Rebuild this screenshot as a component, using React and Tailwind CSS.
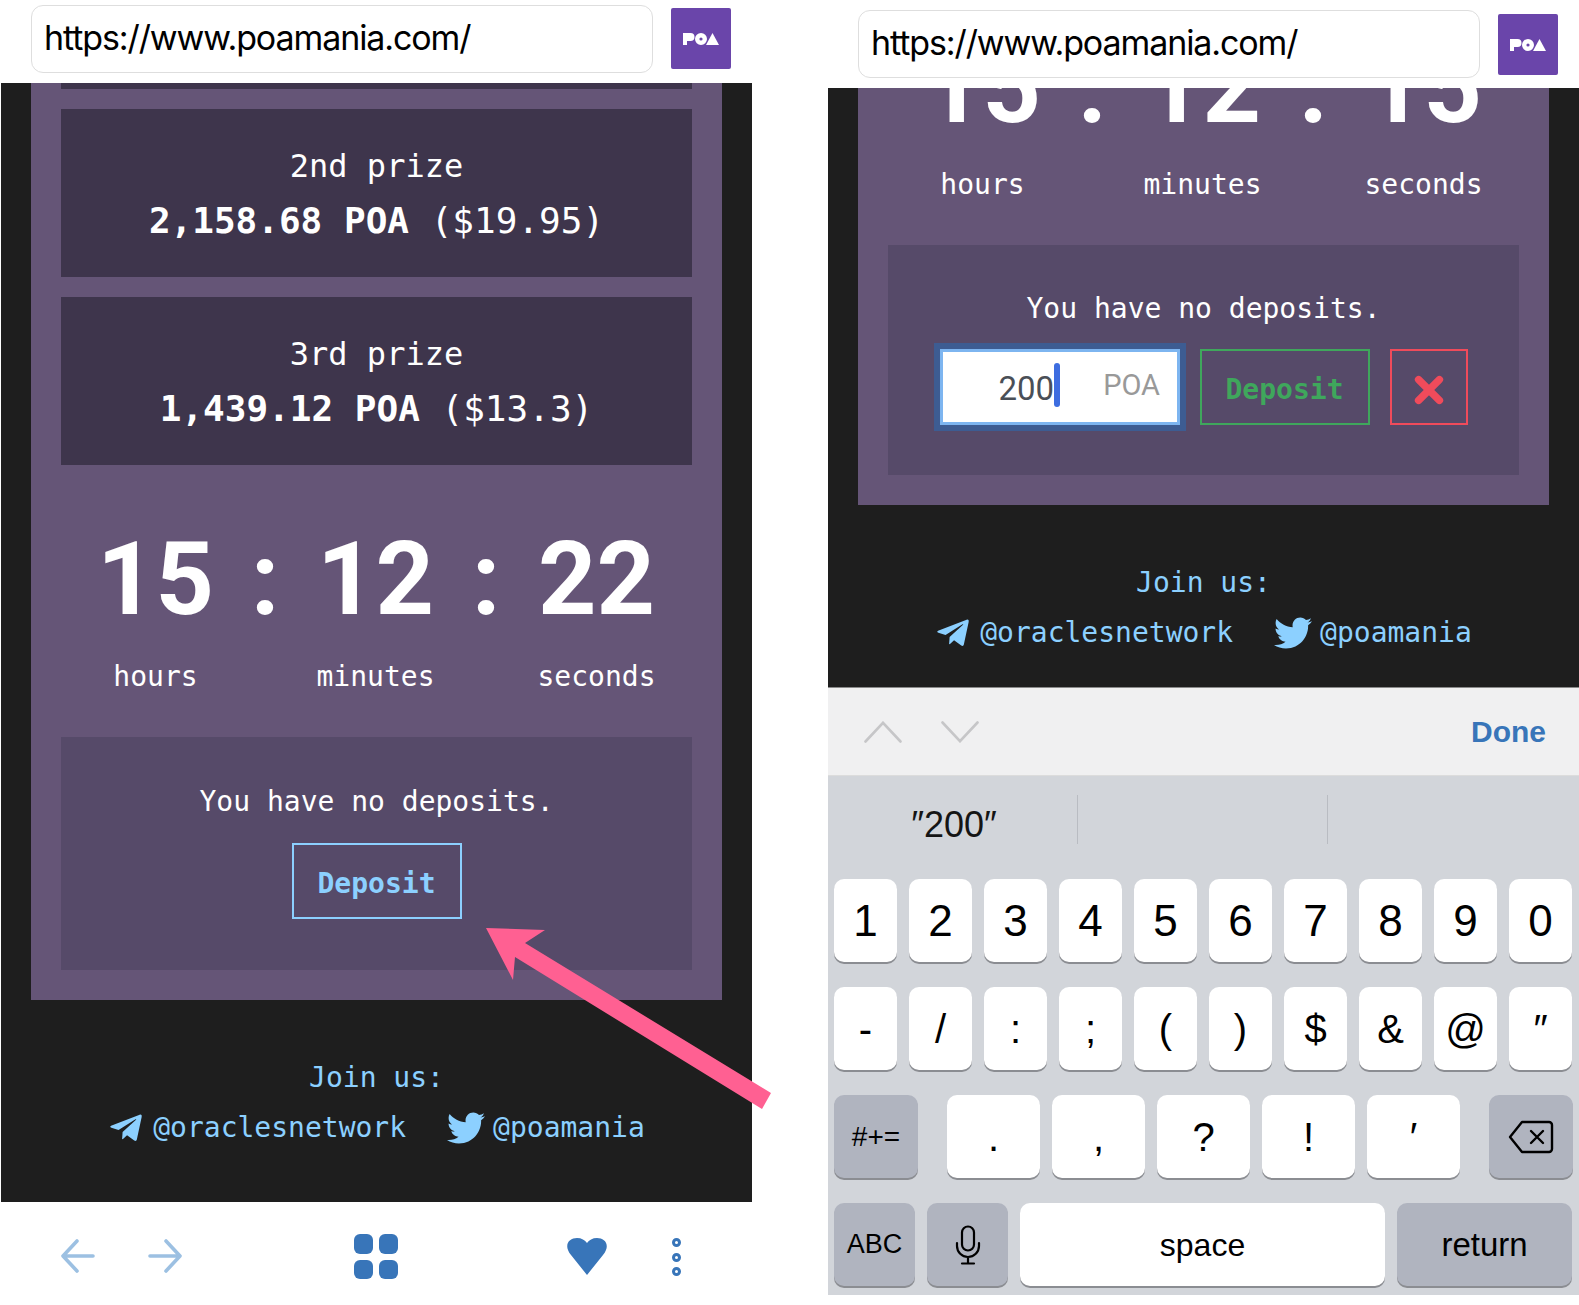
import React from "react";
import { FaTelegramPlane, FaTwitter } from "react-icons/fa";

const Logo = () => (
  <div className="w-[60px] h-[61px] bg-[#6a45aa] rounded-[2px] flex items-center justify-center">
    <svg width="36" height="12" viewBox="0 0 36 12" fill="#fff">
      <path d="M0 0h7.5a4 4 0 0 1 0 8H4v4H0z" />
      <path fillRule="evenodd" d="M18 0a6 6 0 1 1 0 12a6 6 0 0 1 0-12zm0 4.4a1.6 1.6 0 1 0 0 3.2a1.6 1.6 0 0 0 0-3.2z" />
      <path d="M29.500 0L36 12H23z" />
    </svg>
  </div>
);

const UrlBar = () => (
  <div className="h-[68px] w-[622px] bg-white border border-[#dedede] rounded-[12px] pl-[12px] flex items-center">
    <span className="font-['Inter',sans-serif] text-[34px] leading-none text-black tracking-[-1.1px] pb-[3px]">
      https://www.poamania.com/
    </span>
  </div>
);

const Prize = ({ title, poa, usd }) => (
  <div className="h-[168px] bg-[#3e354c] text-white flex flex-col items-center pt-[37px]">
    <div className="text-[32px] leading-[40px]">{title}</div>
    <div className="text-[36px] leading-[44px] mt-[13px] whitespace-pre">
      <span className="font-bold">{poa}</span> ({usd})
    </div>
  </div>
);

const Timer = ({ h, m, s, className }) => (
  <div className={"grid grid-cols-[128px_91px_130px_91px_130px] justify-center text-white " + className}>
    {[h, ":", m, ":", s].map((t, i) => (
      <div key={i} className="font-['Roboto',sans-serif] font-bold text-[102px] leading-[104px] text-center">
        {t}
      </div>
    ))}
    <div className="text-[28px] leading-[40px] mt-[26px] text-center">hours</div>
    <div />
    <div className="text-[28px] leading-[40px] mt-[26px] text-center">minutes</div>
    <div />
    <div className="text-[28px] leading-[40px] mt-[26px] text-center">seconds</div>
  </div>
);

const Footer = () => (
  <div className="flex flex-col items-center text-[#8cd0ff] text-[28px] leading-[40px] pt-[58px]">
    <div>Join us:</div>
    <div className="flex items-center mt-[10px]">
      <FaTelegramPlane size={36} className="mr-[9px]" />
      <span>@oraclesnetwork</span>
      <FaTwitter size={38} className="ml-[41px] mr-[8px]" />
      <span>@poamania</span>
    </div>
  </div>
);

const Key = ({ children, w = "w-[63px]", dark, size = "text-[44px]" }) => (
  <div
    className={
      "h-[83px] rounded-[10px] shadow-[0_2px_0_#8b8d92] flex items-center justify-center text-black leading-none " +
      w + " " + size + " " + (dark ? "bg-[#b0b4bf]" : "bg-white")
    }
  >
    {children}
  </div>
);

const Keyboard = () => (
  <div className="font-['Liberation_Sans',sans-serif] bg-[#d2d5da] h-[520px] border-t border-[#dcdcdc]">
    <div className="h-[103px] relative flex items-center">
      <div className="ml-[81px] w-[90px] text-center text-[36px] leading-none text-[#151515] mt-[-6px]">″200″</div>
      <div className="absolute left-[249px] top-[19px] h-[49px] w-px bg-[#b9bcc2]" />
      <div className="absolute left-[499px] top-[19px] h-[49px] w-px bg-[#b9bcc2]" />
    </div>
    <div className="px-[6px] flex flex-col gap-[25px]">
      <div className="flex gap-[12px]">
        {"1234567890".split("").map((k) => (
          <Key key={k}>{k}</Key>
        ))}
      </div>
      <div className="flex gap-[12px]">
        {["-", "/", ":", ";", "(", ")", "$", "&", "@", "″"].map((k) => (
          <Key key={k} size="text-[40px]">{k}</Key>
        ))}
      </div>
      <div className="flex justify-between">
        <Key w="w-[84px]" dark size="text-[28px]">#+=</Key>
        <div className="flex gap-[12px]">
          {[".", ",", "?", "!", "′"].map((k) => (
            <Key key={k} w="w-[93px]" size="text-[40px]">{k}</Key>
          ))}
        </div>
        <Key w="w-[84px]" dark>
          <svg width="46" height="34" viewBox="0 0 46 34" fill="none" stroke="#000" strokeWidth="2.4" strokeLinejoin="round" strokeLinecap="round">
            <path d="M14 2h27a3 3 0 0 1 3 3v24a3 3 0 0 1-3 3H14L2 17z" />
            <path d="M23 11l12 12M35 11L23 23" />
          </svg>
        </Key>
      </div>
      <div className="flex gap-[12px]">
        <Key w="w-[81px]" dark size="text-[27px]">ABC</Key>
        <Key w="w-[81px]" dark>
          <svg width="26" height="40" viewBox="0 0 26 40" fill="none" stroke="#000" strokeWidth="2.2" strokeLinecap="round">
            <rect x="7" y="1.5" width="12" height="24" rx="6" />
            <path d="M2 18v3a11 11 0 0 0 22 0v-3M13 32v6M7 38.5h12" />
          </svg>
        </Key>
        <Key w="w-[365px]" size="text-[32px]">space</Key>
        <Key w="w-[175px]" dark size="text-[33px]">return</Key>
      </div>
    </div>
  </div>
);

const Toolbar = () => (
  <div className="h-[88px] bg-[#f0f0f1] border-t border-[#8a8a8a] flex items-center pl-[36px] pr-[33px] font-['Liberation_Sans',sans-serif]">
    <svg width="38" height="22" viewBox="0 0 38 22" fill="none" stroke="#c6c6c8" strokeWidth="2.6" strokeLinecap="round">
      <path d="M1.5 20.5L19 1.8L36.5 20.5" />
    </svg>
    <svg width="38" height="22" viewBox="0 0 38 22" fill="none" stroke="#c6c6c8" strokeWidth="2.6" strokeLinecap="round" className="ml-[39px]">
      <path d="M1.5 1.5L19 20.2L36.5 1.5" />
    </svg>
    <span className="ml-auto text-[30px] font-bold text-[#3875b9] leading-none">Done</span>
  </div>
);

const BottomBar = () => (
  <div className="bg-white h-[103px] flex items-start pl-[60px]">
    <svg width="34" height="34" viewBox="0 0 34 34" fill="none" stroke="#9cc0e2" strokeWidth="3.6" strokeLinecap="round" strokeLinejoin="round" className="mt-[37px]">
      <path d="M32 17H3M16 2L2 17l14 15" />
    </svg>
    <svg width="34" height="34" viewBox="0 0 34 34" fill="none" stroke="#9cc0e2" strokeWidth="3.6" strokeLinecap="round" strokeLinejoin="round" className="ml-[53px] mt-[37px]">
      <path d="M2 17h29M18 2l14 15L18 32" />
    </svg>
    <div className="grid grid-cols-[19px_19px] grid-rows-[19.5px_19.5px] gap-[6px] ml-[172px] mt-[32px]">
      <div className="bg-[#3875b9] rounded-[6px]" />
      <div className="bg-[#3875b9] rounded-[6px]" />
      <div className="bg-[#3875b9] rounded-[6px]" />
      <div className="bg-[#3875b9] rounded-[6px]" />
    </div>
    <svg width="40" height="37" viewBox="0 0 40 37" fill="#3875b9" className="ml-[169px] mt-[36px]">
      <path d="M20 37L4 17C-4 7 2 0 10 0c4.500 0 8 2 10 5c2-3 5.500-5 10-5c8 0 14 7 6 17z" />
    </svg>
    <div className="flex flex-col gap-[5.5px] ml-[65px] mt-[36px]">
      <div className="w-[9px] h-[9px] rounded-full border-[3px] border-[#3875b9]" />
      <div className="w-[9px] h-[9px] rounded-full border-[3px] border-[#3875b9]" />
      <div className="w-[9px] h-[9px] rounded-full border-[3px] border-[#3875b9]" />
    </div>
  </div>
);

export default function App() {
  return (
    <div className="relative w-[1579px] h-[1305px] overflow-hidden bg-white flex font-['DejaVu_Sans_Mono',monospace]">
      {/* left phone */}
      <div className="w-[751px] ml-px flex flex-col">
        <div className="h-[83px] bg-white flex items-start pl-[30px] gap-[18px]">
          <div className="mt-[5px]"><UrlBar /></div>
          <div className="mt-[8px]"><Logo /></div>
        </div>
        <div className="h-[1119px] bg-[#1e1e1e] px-[30px]">
          <div className="bg-[#655577] h-[917px] px-[30px] flex flex-col">
            <div className="h-[6px] bg-[#3e354c]" />
            <div className="mt-[20px] flex flex-col gap-[20px]">
              <Prize title="2nd prize" poa="2,158.68 POA" usd="$19.95" />
              <Prize title="3rd prize" poa="1,439.12 POA" usd="$13.3" />
            </div>
            <Timer h="15" m="12" s="22" className="pt-[62px] pb-[40px]" />
            <div className="h-[233px] bg-[#564a69] text-white flex flex-col items-center pt-[45px]">
              <div className="text-[28px] leading-[40px]">You have no deposits.</div>
              <div className="mt-[21px] w-[170px] h-[76px] border-2 border-[#8cd0ff] text-[#8cd0ff] font-bold text-[28px] flex items-center justify-center pt-[5px]">
                Deposit
              </div>
            </div>
          </div>
          <Footer />
        </div>
        <BottomBar />
      </div>
      {/* right phone */}
      <div className="w-[751px] ml-[76px] flex flex-col">
        <div className="h-[88px] bg-white flex items-start pl-[30px] gap-[18px]">
          <div className="mt-[10px]"><UrlBar /></div>
          <div className="mt-[14px]"><Logo /></div>
        </div>
        <div className="h-[599px] bg-[#1e1e1e] px-[30px] overflow-hidden">
          <div className="bg-[#655577] h-[417px] px-[30px] overflow-hidden">
            <Timer h="15" m="12" s="15" className="mt-[-115px] pt-[62px] pb-[40px]" />
            <div className="h-[230px] bg-[#564a69] text-white flex flex-col items-center pt-[44px]">
              <div className="text-[28px] leading-[40px]">You have no deposits.</div>
              <div className="mt-[20px] flex items-stretch gap-[20px] h-[76px]">
                <div className="w-[240px] bg-white border-[3px] border-[#7db5f0] shadow-[0_0_0_6px_#3d5c92] flex items-center font-['Roboto',sans-serif] text-[33px] leading-none">
                  <span className="ml-[56px] text-[#4a4f57] pt-[3px]">200</span>
                  <span className="w-[6px] h-[44px] rounded-full bg-[#3d6de0] mb-[4px]" />
                  <span className="ml-[43px] text-[#999] text-[29px] pb-[4px]">POA</span>
                </div>
                <div className="w-[170px] border-2 border-[#3fa75c] text-[#3fa75c] font-bold text-[28px] flex items-center justify-center pt-[6px]">
                  Deposit
                </div>
                <div className="w-[78px] border-2 border-[#f04b5b] flex items-center justify-center pt-[5px]">
                  <svg width="30" height="30" viewBox="0 0 26 26" fill="none" stroke="#f04b5b" strokeWidth="6.5" strokeLinecap="round">
                    <path d="M4 4l18 18M22 4L4 22" />
                  </svg>
                </div>
              </div>
            </div>
          </div>
          <Footer />
        </div>
        <Toolbar />
        <Keyboard />
      </div>
      {/* pink annotation arrow */}
      <svg width="1579" height="1305" className="absolute left-0 top-0 pointer-events-none">
        <polygon points="486,928 545,930 525,943 771,1093 762,1109 515,957 513,980" fill="#ff6092" />
      </svg>
    </div>
  );
}
